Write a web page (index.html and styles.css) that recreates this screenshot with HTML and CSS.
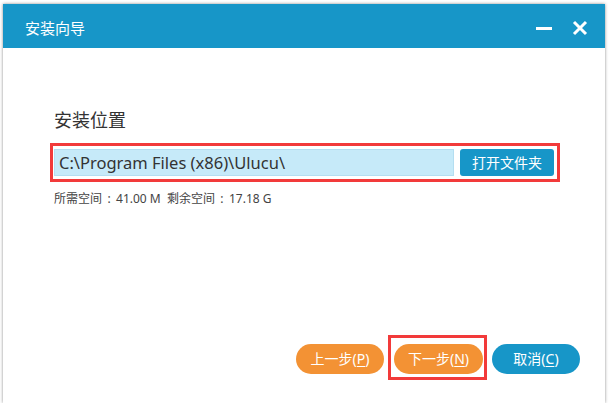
FILE: index.html
```html
<!DOCTYPE html>
<html>

<head>
    <title>安装向导</title>
    <link rel="stylesheet" href="styles.css">
</head>

<body>
    <div class="window">
        <div class="titlebar">
            <div class="title">安装向导</div>
            <div class="controls">
                <svg class="ctl" width="16" height="16" viewBox="0 0 16 16">
                    <rect x="0" y="7" width="16" height="3" fill="#fff" />
                </svg>
                <svg class="ctl" width="16" height="16" viewBox="0 0 16 16">
                    <path d="M2 2 L14 14 M14 2 L2 14" stroke="#fff" stroke-width="3" />
                </svg>
            </div>
        </div>

        <div class="content">
            <div class="section-title">安装位置</div>

            <div class="path-row">
                <div class="path-input">C:\Program Files (x86)\Ulucu\</div>
                <div class="browse-btn">打开文件夹</div>
            </div>

            <div class="space-info">所需空间<span class="colon">:</span>41.00 M&nbsp;&nbsp;剩余空间<span class="colon">:</span>17.18 G</div>

            <div class="actions">
                <div class="btn orange">上一步(<u>P</u>)</div>
                <div class="next-box">
                    <div class="btn orange">下一步(<u>N</u>)</div>
                </div>
                <div class="btn blue">取消(<u>C</u>)</div>
            </div>
        </div>
    </div>
</body>

</html>
```

FILE: styles.css
```css
body {
    margin: 0;
    padding: 0;
    background-color: #ffffff;
    font-family: "Noto Sans", "Noto Sans CJK SC", sans-serif;
    color: #333;
}

.window {
    margin: 4px 0 0 3px;
    width: 602px;
    height: 399px;
    background-color: #ffffff;
    box-shadow: 0 0 3px rgba(0, 0, 0, 0.45);
    display: flex;
    flex-direction: column;
}

.titlebar {
    height: 44px;
    background-color: #1796c8;
    display: flex;
    align-items: center;
    justify-content: space-between;
    padding: 0 17px 0 22px;
}

.title {
    color: #ffffff;
    font-size: 15px;
    line-height: 20px;
    margin-top: 3px;
}

.controls {
    display: flex;
    gap: 20px;
    margin-top: 4px;
}

.content {
    flex: 1;
    display: flex;
    flex-direction: column;
    padding: 60px 25px 23px 47px;
}

.section-title {
    font-size: 18px;
    line-height: 24px;
    margin-left: 4px;
    color: #333;
}

.path-row {
    margin-top: 11px;
    width: 502px;
    border: 3px solid #f23a3a;
    padding: 3px 1px;
    display: flex;
    gap: 6px;
}

.path-input {
    width: 394px;
    height: 25px;
    background-color: #c6eaf9;
    border: 1px solid #b4def1;
    font-size: 16.5px;
    line-height: 25px;
    padding-left: 4px;
    color: #333;
    white-space: nowrap;
}

.browse-btn {
    width: 94px;
    height: 27px;
    border-radius: 3px;
    background-color: #1796c8;
    color: #ffffff;
    font-size: 14px;
    line-height: 27px;
    text-align: center;
}

.space-info {
    margin-top: 9px;
    margin-left: 4px;
    font-size: 12px;
    line-height: 16px;
    color: #444;
}

.colon {
    display: inline-block;
    width: 14px;
    text-align: center;
}

.actions {
    margin-top: auto;
    display: flex;
    justify-content: flex-end;
    align-items: flex-end;
    gap: 4px;
}

.btn {
    width: 88px;
    height: 30px;
    border-radius: 15px;
    color: #ffffff;
    font-size: 14px;
    line-height: 30px;
    text-align: center;
    margin-bottom: 6px;
}

.btn u {
    text-underline-offset: 2px;
}

.orange {
    background-color: #f39234;
}

.blue {
    background-color: #1796c8;
    margin-left: 1px;
}

.next-box {
    border: 3px solid #f23a3a;
    padding: 6px 1px 3px 3px;
}

.next-box .btn {
    width: 89px;
    margin-bottom: 0;
}
```
